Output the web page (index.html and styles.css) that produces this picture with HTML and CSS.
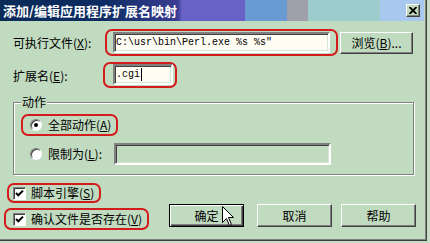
FILE: index.html
```html
<!DOCTYPE html>
<html lang="zh-CN">
<head>
    <meta charset="UTF-8">
    <title>添加/编辑应用程序扩展名映射</title>
    <link rel="stylesheet" href="styles.css">
</head>
<body>
<div class="window">
    <div class="titlebar">
        <span class="title">添加/编辑应用程序扩展名映射</span>
        <span class="close">
            <svg width="8" height="7" viewBox="0 0 8 7"><path d="M0.5,0 L7.5,7 M7.5,0 L0.5,7" stroke="#000" stroke-width="1.9"/></svg>
        </span>
    </div>

    <div class="row row-exe">
        <span class="label label-exe">可执行文件(<u>X</u>):</span>
        <span class="mark mark-exe"><span class="field field-exe">C:\usr\bin\Perl.exe %s %s"</span></span>
        <span class="btn btn-browse">浏览(<u>B</u>)...</span>
    </div>

    <div class="row row-ext">
        <span class="label label-ext">扩展名(<u>E</u>):</span>
        <span class="mark mark-ext"><span class="field field-ext">.cgi<span class="caret"></span></span></span>
    </div>

    <fieldset class="group">
        <legend>动作</legend>
        <div class="option">
            <span class="mark mark-all"><span class="radio checked"></span><span class="opt-text">全部动作(<u>A</u>)</span></span>
        </div>
        <div class="option option-limit">
            <span class="radio"></span><span class="opt-text limit-text">限制为(<u>L</u>):</span>
            <span class="field field-limit"></span>
        </div>
    </fieldset>

    <div class="bottom">
        <div class="checks">
            <span class="mark mark-script"><span class="check"><svg width="9" height="9" viewBox="0 0 9 9"><path d="M1,4 L3.3,6.3 L8,1.6" fill="none" stroke="#000" stroke-width="2"/></svg></span><span class="check-text">脚本引擎(<u>S</u>)</span></span>
            <span class="mark mark-exists"><span class="check"><svg width="9" height="9" viewBox="0 0 9 9"><path d="M1,4 L3.3,6.3 L8,1.6" fill="none" stroke="#000" stroke-width="2"/></svg></span><span class="check-text">确认文件是否存在(<u>V</u>)</span></span>
        </div>
        <div class="buttons">
            <span class="btn btn-default">确定</span>
            <span class="btn btn-cancel">取消</span>
            <span class="btn btn-help">帮助</span>
        </div>
    </div>

    <svg class="cursor" width="13" height="21" viewBox="0 0 13 21">
        <path d="M0.5,0.5 L0.5,16.5 L4.5,12.5 L7.5,19.5 L9.5,18.5 L6.5,11.5 L11.5,11.5 Z" fill="#fff" stroke="#000" stroke-width="1"/>
    </svg>
</div>
</body>
</html>
```

FILE: styles.css
```css
:root {
    --face: #c0dbbf;
    --mark: #d41c1c;
    --shadow: #808080;
    --dark: #404040;
}

* {
    box-sizing: border-box;
}

body {
    margin: 0;
    background: #c6dec5;
    font-family: "Noto Sans CJK SC", "Liberation Sans", sans-serif;
    font-size: 12px;
    color: #000;
}

u {
    text-underline-offset: 1px;
}

.window {
    position: relative;
    width: 427px;
    height: 241px;
    background: var(--face);
    border-right: 1px solid var(--dark);
    border-bottom: 1px solid var(--dark);
    box-shadow: inset -1px -1px 0 var(--shadow);
}

/* title bar */
.titlebar {
    height: 21px;
    display: flex;
    align-items: center;
    padding-left: 3px;
    margin-right: 2px;
    background: linear-gradient(90deg,
        #0a2a58 0, #0c2c62 100px, #3a3c92 178px,
        #6962c6 182px, #6962c6 245px,
        #6a9ad2 245px, #6a9ad2 287px,
        #a0a0aa 287px, #a0a0aa 308px,
        #9ccccc 308px, #9ccccc 380px,
        #a8c8f0 380px);
}

.title {
    color: #fff;
    font-weight: bold;
    font-size: 13px;
    line-height: 21px;
}

.close {
    margin-left: auto;
    margin-right: 4px;
    width: 14px;
    height: 13px;
    display: flex;
    align-items: center;
    justify-content: center;
    background: var(--face);
    border: 1px solid;
    border-color: #fff var(--dark) var(--dark) #fff;
    box-shadow: inset -1px -1px 0 var(--shadow);
}

/* rows */
.row {
    display: flex;
    align-items: center;
    padding-left: 13px;
}

.row-exe {
    margin-top: 8px;
}

.row-ext {
    margin-top: 6px;
}

.label-exe {
    width: 92px;
}

.label-ext {
    width: 90px;
}

/* red hand-drawn marks */
.mark {
    display: inline-flex;
    align-items: center;
    border: 2px solid var(--mark);
    border-radius: 7px;
}

.mark-exe {
    padding: 1px 6px;
}

.mark-ext {
    padding: 0 2px 1px 8px;
}

.field {
    display: block;
    height: 21px;
    padding-left: 1px;
    background: #fffdf3;
    border: 2px solid;
    border-color: var(--shadow) #fff #fff var(--shadow);
    box-shadow: inset 1px 1px 0 var(--dark), inset -1px -1px 0 #d8e6d6;
    font-family: "Liberation Mono", monospace;
    font-size: 10px;
    line-height: 17px;
}

.field-exe {
    width: 217px;
}

.field-ext {
    width: 60px;
    display: flex;
    align-items: center;
}

.caret {
    width: 1px;
    height: 13px;
    margin-left: 1px;
    background: #000;
}

.field-limit {
    width: 217px;
    height: 22px;
    background: var(--face);
}

/* buttons */
.btn {
    display: flex;
    align-items: center;
    justify-content: center;
    width: 75px;
    height: 23px;
    background: var(--face);
    border: 1px solid;
    border-color: #fff var(--dark) var(--dark) #fff;
    box-shadow: inset -1px -1px 0 var(--shadow);
}

.btn-browse {
    width: 73px;
    height: 22px;
    margin-left: 2px;
}

.btn-default {
    border-color: #000;
    box-shadow: inset 1px 1px 0 #fff, inset -1px -1px 0 var(--dark), inset -2px -2px 0 var(--shadow);
}

.btn-cancel {
    margin-left: 13px;
}

.btn-help {
    margin-left: 9px;
}

/* group box */
.group {
    width: 401px;
    margin: 7px 0 0 13px;
    padding: 0 0 9px 7px;
    border: 1px solid var(--shadow);
    box-shadow: inset 1px 1px 0 #fff, 1px 1px 0 #fff;
}

.group legend {
    padding: 0 1px;
    line-height: 14px;
    background: var(--face);
}

.option {
    display: flex;
    align-items: center;
    height: 22px;
    margin-top: 5px;
}

.mark-all {
    height: 22px;
    padding: 0 5px 0 7px;
}

.option-limit {
    margin-top: 7px;
    padding-left: 9px;
}

.radio {
    position: relative;
    width: 12px;
    height: 12px;
    border-radius: 50%;
    background: #fff;
    border: 1px solid;
    border-color: var(--shadow) #fff #fff var(--shadow);
    box-shadow: inset 1px 1px 0 var(--dark);
}

.radio.checked::after {
    content: "";
    position: absolute;
    left: 3px;
    top: 3px;
    width: 4px;
    height: 4px;
    border-radius: 50%;
    background: #000;
}

.opt-text {
    margin-left: 6px;
    line-height: 14px;
}

.limit-text {
    width: 66px;
}

/* bottom area */
.bottom {
    display: flex;
    margin-top: 8px;
}

.checks {
    display: flex;
    flex-direction: column;
    align-items: flex-start;
}

.mark-script {
    height: 20px;
    margin-left: 7px;
    padding: 0 5px 0 4px;
}

.mark-exists {
    height: 22px;
    margin-top: 5px;
    margin-left: 4px;
    padding: 0 5px 0 7px;
}

.check {
    display: flex;
    align-items: center;
    justify-content: center;
    width: 13px;
    height: 13px;
    background: #fff;
    border: 1px solid;
    border-color: var(--shadow) #fff #fff var(--shadow);
    box-shadow: inset 1px 1px 0 var(--dark);
}

.check-text {
    margin-left: 5px;
    line-height: 14px;
}

.buttons {
    display: flex;
    margin-left: auto;
    margin-right: 10px;
    padding-top: 21px;
}

.cursor {
    position: absolute;
    left: 222px;
    top: 206px;
}
```
